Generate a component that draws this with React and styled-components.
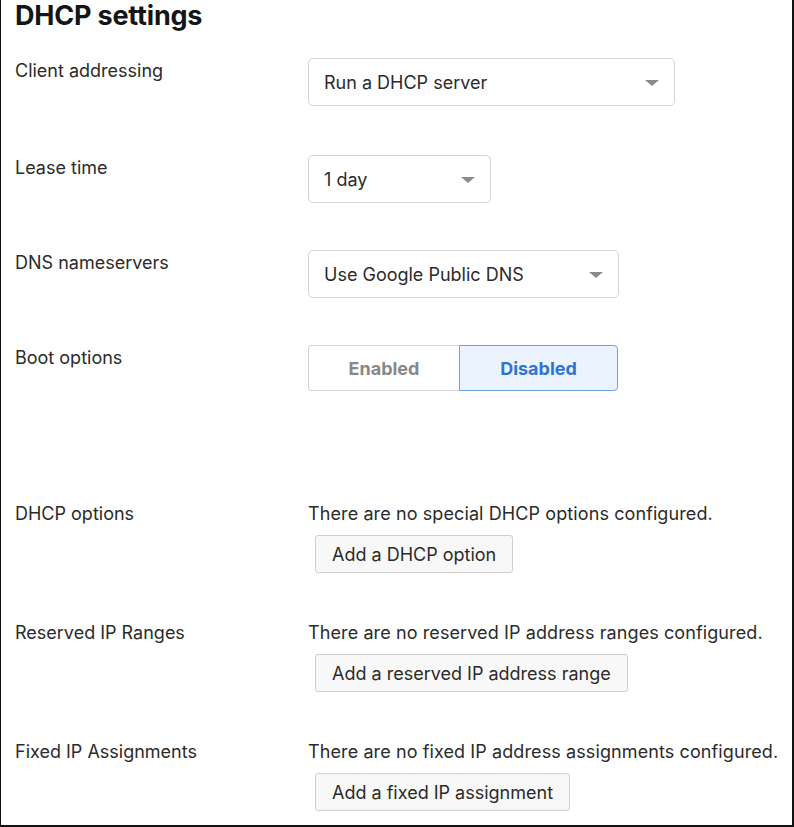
import React, { useState } from "react";
import styled, { createGlobalStyle } from "styled-components";

const GlobalStyle = createGlobalStyle`
  html, body {
    margin: 0;
    padding: 0;
    background: #fff;
  }
  body {
    font-family: Inter, "Noto Sans", "Liberation Sans", sans-serif;
    color: #2b2b2b;
  }
`;

const Frame = styled.div`
  box-sizing: border-box;
  width: 794px;
  height: 827px;
  border-left: 1px solid #111;
  border-right: 2px solid #111;
  border-bottom: 2px solid #111;
  padding: 0 14px;
  overflow: hidden;
`;

const Title = styled.h2`
  margin: 0;
  padding-top: 0;
  font-size: 27px;
  line-height: 31px;
  font-weight: 700;
  color: #151515;
  letter-spacing: -0.2px;
`;

const Rows = styled.div`
  display: flex;
  flex-direction: column;
`;

const Row = styled.div`
  display: grid;
  grid-template-columns: 293px 1fr;
  align-items: start;
  margin-top: ${(p) => p.$top}px;
`;

const Label = styled.div`
  font-size: 18px;
  line-height: 22px;
  padding-top: ${(p) => p.$pad || 0}px;
  color: #2b2b2b;
`;

const Select = styled.div`
  box-sizing: border-box;
  width: ${(p) => p.$w}px;
  height: 48px;
  border: 1px solid #d4d4d4;
  border-radius: 5px;
  background: #fff;
  display: flex;
  align-items: center;
  justify-content: space-between;
  padding: 0 15px 0 15px;
  font-size: 18px;
  color: #2b2b2b;
`;

const Caret = styled.span`
  width: 0;
  height: 0;
  border-left: 7px solid transparent;
  border-right: 7px solid transparent;
  border-top: 6px solid #8a8a8a;
  margin-top: 1px;
`;

const Segmented = styled.div`
  display: flex;
  width: 310px;
  height: 46px;
`;

const Segment = styled.button`
  box-sizing: border-box;
  ${(p) => (p.$first ? "width: 151px; flex: none;" : "flex: 1;")}
  font-family: inherit;
  font-size: 18px;
  font-weight: 700;
  cursor: pointer;
  border: 1px solid ${(p) => (p.$active ? "#6aa3e0" : "#d4d4d4")};
  background: ${(p) => (p.$active ? "#eaf3fe" : "#fff")};
  color: ${(p) => (p.$active ? "#2f74d0" : "#888")};
  border-radius: ${(p) => (p.$first ? "4px 0 0 4px" : "0 4px 4px 0")};
  ${(p) => (p.$first ? "border-right: none;" : "")}
`;

const Block = styled.div`
  display: flex;
  flex-direction: column;
  align-items: flex-start;
`;

const Note = styled.div`
  font-size: 18px;
  line-height: 22px;
  letter-spacing: 0.1px;
  white-space: nowrap;
  color: #2b2b2b;
`;

const AddButton = styled.button`
  box-sizing: border-box;
  margin: 10px 0 0 7px;
  height: 38px;
  padding: 0 16px;
  font-family: inherit;
  font-size: 18px;
  color: #2b2b2b;
  background: #f8f8f8;
  border: 1px solid #cfcfcf;
  border-radius: 3px;
  cursor: pointer;
`;

export default function App() {
  const [boot, setBoot] = useState(false);

  return (
    <>
      <GlobalStyle />
      <Frame>
        <Title>DHCP settings</Title>
        <Rows>
          <Row $top={27}>
            <Label $pad={2}>Client addressing</Label>
            <Select $w={367}>
              Run a DHCP server
              <Caret />
            </Select>
          </Row>
          <Row $top={49}>
            <Label $pad={2}>Lease time</Label>
            <Select $w={183}>
              1 day
              <Caret />
            </Select>
          </Row>
          <Row $top={47}>
            <Label $pad={2}>DNS nameservers</Label>
            <Select $w={311}>
              Use Google Public DNS
              <Caret />
            </Select>
          </Row>
          <Row $top={47}>
            <Label $pad={2}>Boot options</Label>
            <Segmented>
              <Segment $first $active={boot} onClick={() => setBoot(true)}>
                Enabled
              </Segment>
              <Segment $active={!boot} onClick={() => setBoot(false)}>
                Disabled
              </Segment>
            </Segmented>
          </Row>
          <Row $top={112}>
            <Label>DHCP options</Label>
            <Block>
              <Note>There are no special DHCP options configured.</Note>
              <AddButton>Add a DHCP option</AddButton>
            </Block>
          </Row>
          <Row $top={49}>
            <Label>Reserved IP Ranges</Label>
            <Block>
              <Note>There are no reserved IP address ranges configured.</Note>
              <AddButton>Add a reserved IP address range</AddButton>
            </Block>
          </Row>
          <Row $top={49}>
            <Label>Fixed IP Assignments</Label>
            <Block>
              <Note>There are no fixed IP address assignments configured.</Note>
              <AddButton>Add a fixed IP assignment</AddButton>
            </Block>
          </Row>
        </Rows>
      </Frame>
    </>
  );
}
